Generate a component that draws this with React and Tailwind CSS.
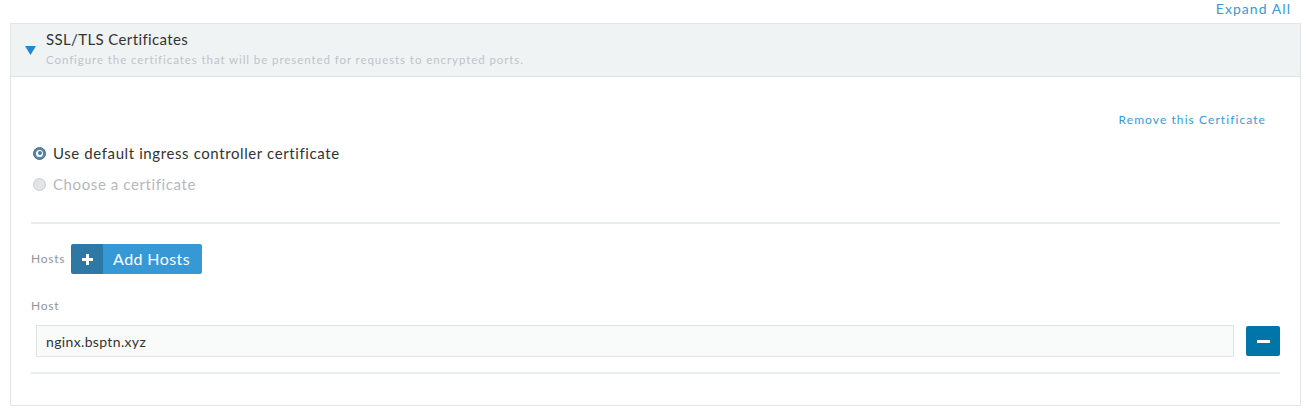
import React from "react";

export default function App() {
  return (
    <div className="w-[1313px] h-[412px] bg-white text-[#333]" style={{ fontFamily: "Lato, 'Open Sans', sans-serif" }}>
      <div className="flex justify-end pr-[22px] h-[23px] items-start">
        <a className="text-[14px] leading-[18px] tracking-[0.075em] text-[#3d98d3]">Expand All</a>
      </div>
      <div className="ml-[10px] w-[1291px] border border-[#e2e6e8] h-[383px]">
        <div className="flex items-start h-[53px] bg-[#f0f3f4] border-b border-[#dfe3e6] pl-[14px]">
          <svg width="11" height="9" viewBox="0 0 11 9" className="mt-[22px]">
            <polygon points="0,0 11,0 5.5,9" fill="#1f88d0" />
          </svg>
          <div className="ml-[10px] mt-[5px]">
            <div className="text-[15px] leading-[20px] tracking-[0.025em] text-[#333]">SSL/TLS Certificates</div>
            <div className="text-[11.5px] leading-[16px] mt-[3px] text-[#bfc4c9] tracking-[0.08em]">Configure the certificates that will be presented for requests to encrypted ports.</div>
          </div>
        </div>
        <div className="px-[20px]">
          <div className="flex justify-end pr-[14px] pt-[35px]">
            <a className="text-[12px] leading-[16px] tracking-[0.09em] text-[#3d98d3]">Remove this Certificate</a>
          </div>
          <div className="mt-[13px] flex items-center h-[24px]">
            <span className="w-[13px] h-[13px] rounded-full bg-[#5a83a6] border border-[#4c6f8e] flex items-center justify-center ml-[2px]">
              <span className="w-[7px] h-[7px] rounded-full bg-white flex items-center justify-center">
                <span className="w-[4px] h-[4px] rounded-full bg-[#4f7ca3]" />
              </span>
            </span>
            <span className="ml-[7px] text-[15px] tracking-[0.04em] text-[#333]">Use default ingress controller certificate</span>
          </div>
          <div className="mt-[7px] flex items-center h-[24px]">
            <span className="w-[13px] h-[13px] rounded-full border border-[#c9cdd0] bg-[#e2e4e6] ml-[2px]" />
            <span className="ml-[7px] text-[15px] tracking-[0.04em] text-[#b4b9bd]">Choose a certificate</span>
          </div>
          <div className="mt-[26px] h-[2px] bg-[#eaeeee]" />
          <div className="mt-[20px] flex items-center">
            <span className="text-[12px] text-[#8e969c] tracking-[0.06em]">Hosts</span>
            <button className="ml-[6px] flex h-[30px] rounded-[2px] overflow-hidden text-white">
              <span className="w-[32px] h-full bg-[#2e78a6] flex items-center justify-center">
                <svg width="11" height="11" viewBox="0 0 11 11"><rect x="4" y="0" width="3" height="11" fill="white" /><rect x="0" y="4" width="11" height="3" fill="white" /></svg>
              </span>
              <span className="w-[99px] h-full bg-[#3798d6] flex items-center pl-[10px] text-[16px] tracking-[0.025em]">Add Hosts</span>
            </button>
          </div>
          <div className="mt-[24px] text-[12px] text-[#8e969c] tracking-[0.06em] leading-[16px]">Host</div>
          <div className="mt-[11px] flex items-center">
            <div className="ml-[5px] flex-1 h-[32px] border border-[#dde4e4] bg-[#f9fbfb] flex items-center pl-[9px] text-[14px] tracking-[0.025em] text-[#333]">nginx.bsptn.xyz</div>
            <button className="ml-[12px] w-[34px] h-[30px] bg-[#0075a8] rounded-[2px] flex items-center justify-center">
              <span className="w-[13px] h-[3px] bg-white" />
            </button>
          </div>
          <div className="mt-[15px] h-[2px] bg-[#eaeeee]" />
        </div>
      </div>
    </div>
  );
}
